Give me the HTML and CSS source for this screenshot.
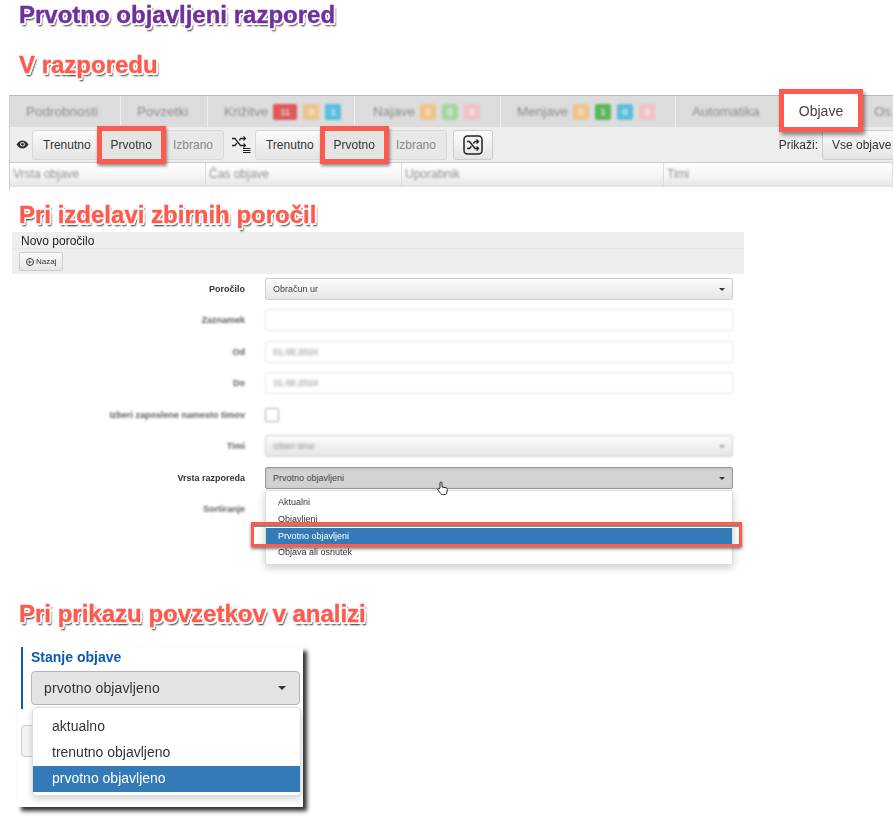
FILE: index.html
```html
<!DOCTYPE html>
<html lang="sl">
<head>
<meta charset="utf-8">
<title>Prvotno objavljeni razpored</title>
<link rel="stylesheet" href="styles.css">
</head>
<body>
<main class="page">
  <h1 class="heading purple">Prvotno objavljeni razpored</h1>
  <h2 class="heading red h-schedule">V razporedu</h2>

  <section class="schedule">
    <nav class="tabs">
      <div class="tab t-pod"><span class="soft">Podrobnosti</span></div>
      <div class="tab t-pov"><span class="soft">Povzetki</span></div>
      <div class="tab t-kri"><span class="soft">Križitve</span><i class="badge wide c-red">11</i><i class="badge c-orange">0</i><i class="badge c-blue">1</i></div>
      <div class="tab t-naj"><span class="soft">Najave</span><i class="badge c-orange">0</i><i class="badge c-green-l">0</i><i class="badge c-pink">0</i></div>
      <div class="tab t-men"><span class="soft">Menjave</span><i class="badge c-orange">0</i><i class="badge c-green">1</i><i class="badge c-blue">0</i><i class="badge c-pink">0</i></div>
      <div class="tab t-aut"><span class="soft">Automatika</span></div>
      <div class="tab-active">Objave</div>
      <div class="tab t-os"><span class="soft">Os</span></div>
    </nav>
    <div class="toolbar">
      <svg class="eye" width="13" height="9" viewBox="0 0 13 9"><path d="M.5 4.500C2.200 1.800 4.200.5 6.500.5s4.300 1.300 6 4c-1.700 2.700-3.700 4-6 4s-4.300-1.300-6-4z" fill="#333"/><circle cx="6.500" cy="4.300" r="2.300" fill="#eee"/><circle cx="6.500" cy="4.300" r="1.400" fill="#333"/></svg>
      <div class="group">
        <span class="btn">Trenutno</span><span class="btn pressed marked">Prvotno</span><span class="btn off">Izbrano</span>
      </div>
      <svg class="shuffle-lines" width="19" height="17" viewBox="0 0 19 17" fill="none" stroke="#222" stroke-width="1.300"><path d="M0 2.500h3l5.500 7H13M0 9.500h3l2-2.500M7.500 4.500l1-2H13"/><path d="M11.500 .5l2 2-2 2M11.500 7.500l2 2-2 2" stroke-width="1.100"/><path d="M11 12.500h7.500M11 14.500h7.500M11 16.500h7.500" stroke-width="1"/></svg>
      <div class="group">
        <span class="btn">Trenutno</span><span class="btn pressed marked">Prvotno</span><span class="btn off">Izbrano</span>
      </div>
      <span class="btn icon-btn">
        <svg width="20" height="20" viewBox="0 0 20 20" fill="none" stroke="#222" stroke-width="1.500"><rect x="1" y="1" width="18" height="18" rx="3.500"/><path d="M4 6.500h2.500l5.500 7h3.500M4 13.500h2.500l1.800-2.300M10.300 8.600l1.700-2.100h3.500"/><path d="M13.500 4.500l2 2-2 2M13.500 11.500l2 2-2 2" stroke-width="1.300"/></svg>
      </span>
      <div class="show">
        <span>Prikaži:</span><span class="btn show-btn">Vse objave</span>
      </div>
    </div>
    <div class="thead">
      <div class="th"><span class="soft">Vrsta objave</span></div>
      <div class="th"><span class="soft">Čas objave</span></div>
      <div class="th"><span class="soft">Uporabnik</span></div>
      <div class="th"><span class="soft">Timi</span></div>
    </div>
  </section>

  <h2 class="heading red h-report">Pri izdelavi zbirnih poročil</h2>

  <section class="report">
    <div class="report-title">Novo poročilo</div>
    <div class="report-bar">
      <span class="back"><svg width="8" height="8" viewBox="0 0 8 8"><circle cx="4" cy="4" r="3.500" fill="none" stroke="#333"/><path d="M5.500 4H3M4 2.700L2.600 4 4 5.300" fill="none" stroke="#333"/></svg>Nazaj</span>
    </div>
    <form class="form">
      <div class="row"><span class="label">Poročilo</span><div class="select"><span>Obračun ur</span><b class="caret"></b></div></div>
      <div class="row gap-10"><span class="label soft">Zaznamek</span><div class="input soft-box"></div></div>
      <div class="row"><span class="label soft">Od</span><div class="input soft-box"><span class="soft muted">01.08.2024</span></div></div>
      <div class="row gap-10"><span class="label soft">Do</span><div class="input soft-box"><span class="soft muted">31.08.2024</span></div></div>
      <div class="row"><span class="label soft">Izberi zaposlene namesto timov</span><div class="check soft-box"></div></div>
      <div class="row gap-10"><span class="label soft">Timi</span><div class="select soft-box"><span class="soft muted">Izberi time</span><b class="caret caret-soft"></b></div></div>
      <div class="row">
        <span class="label">Vrsta razporeda</span>
        <div class="select open"><span>Prvotno objavljeni</span><b class="caret"></b>
          <svg class="hand" width="11" height="14" viewBox="0 0 11 14"><path d="M3 7V2a1 1 0 0 1 2 0v4l4 .8c1 .3 1.500 1 1.300 2L9.700 12c-.2 1-.8 1.500-1.700 1.500H5.500c-.8 0-1.300-.3-1.800-1L1 9c-.7-1 .5-2 1.300-1.200z" fill="#fff" stroke="#222" stroke-width="1"/></svg>
        </div>
        <ul class="menu">
          <li>Aktualni</li>
          <li>Objavljeni</li>
          <li class="current">Prvotno objavljeni</li>
          <li>Objava ali osnutek</li>
          <li class="menu-mark" aria-hidden="true"></li>
        </ul>
      </div>
      <div class="row"><span class="label soft">Sortiranje</span></div>
    </form>
  </section>

  <h2 class="heading red h-analysis">Pri prikazu povzetkov v analizi</h2>

  <section class="card">
    <div class="filter">
      <div class="filter-label">Stanje objave</div>
      <div class="filter-select"><span>prvotno objavljeno</span><b class="caret big"></b></div>
      <ul class="filter-menu">
        <li>aktualno</li>
        <li>trenutno objavljeno</li>
        <li class="current">prvotno objavljeno</li>
      </ul>
    </div>
    <div class="ghost-btn"></div>
  </section>
</main>
</body>
</html>
```
FILE: styles.css
```css
* { box-sizing: border-box; }
html, body { margin: 0; padding: 0; background: #fff; overflow: hidden; }
body { width: 893px; height: 826px; font-family: "Liberation Sans", Arial, sans-serif; color: #333; }
.page { width: 893px; height: 826px; overflow: hidden; padding-top: 1px; filter: blur(.3px); }

.heading {
  margin: 0 0 0 19px;
  font-size: 24px;
  line-height: 28px;
  font-weight: 700;
  -webkit-text-stroke: .4px currentColor;
  text-shadow:
    2px 0 0 #fff, -2px 0 0 #fff, 0 2px 0 #fff, 0 -2px 0 #fff,
    1.500px 1.500px 0 #fff, -1.500px 1.500px 0 #fff, 1.500px -1.500px 0 #fff, -1.500px -1.500px 0 #fff,
    2px 3px 2px rgba(0, 0, 0, .85);
}
.purple { color: #702f9e; }
.red { color: #ff5a4d; }
.h-schedule { margin-top: 22px; }
.h-report { margin-top: 11px; }
.h-analysis { margin-top: 80px; }

.soft { filter: blur(1px); opacity: .8; }
.soft-box { filter: blur(.8px); }

/* schedule */
.schedule { margin: 16px 0 0 9px; width: 884px; height: 95px; border-top: 1px solid #bbb; border-left: 1px solid #ccc; position: relative; }
.tabs { height: 31px; background: #dcdcdc; display: flex; align-items: stretch; font-size: 13.500px; }
.tab { display: flex; align-items: center; gap: 5px; border-right: 1px solid #eee; color: #777; flex: none; padding-left: 16px; }
.t-pod { width: 111px; }
.t-pov { width: 87px; }
.t-kri { width: 147px; }
.t-naj { width: 146px; padding-left: 18px; }
.t-men { width: 175px; }
.t-aut { width: 108px; border-right: 0; }
.t-os { border-right: 0; padding-left: 16px; }
.tab-active { flex: none; width: 74px; margin-top: -2px; background: #fff; display: flex; align-items: center; justify-content: center; font-size: 14px; color: #444; box-shadow: 0 0 0 5px #ff5a4d, 2px 3px 4px 5px rgba(0, 0, 0, .45); position: relative; z-index: 1; }
.badge { width: 16px; height: 16px; margin-right: 1px; border-radius: 2px; font-style: normal; font-size: 9px; color: #fff; display: flex; align-items: center; justify-content: center; filter: blur(1px); }
.badge.wide { width: 24px; }
.c-red { background: #dc5a5a; }
.c-orange { background: #f0c48c; }
.c-blue { background: #5bc0de; }
.c-green-l { background: #a5d6a0; }
.c-green { background: #5cb85c; }
.c-pink { background: #eec4c4; }

.toolbar { height: 36px; background: #eee; border-bottom: 1px solid #ccc; display: flex; align-items: center; font-size: 12px; padding-left: 6px; }
.eye { flex: none; margin-right: 3px; }
.group { display: flex; height: 30px; flex: none; border-radius: 3px; background: #e6e6e6; border: 1px solid #d8d8d8; }
.btn { display: flex; align-items: center; justify-content: center; padding: 0 10px; color: #333; height: 100%; background: linear-gradient(#fbfbfb, #e4e4e4); flex: none; border-radius: 3px 0 0 3px; }
.btn.pressed { background: #e4e4e4; border-radius: 0; padding: 0 9px; margin-left: 1px; }
.btn.off { background: #e8e8e8; color: #888; border-radius: 0 3px 3px 0; padding-left: 12px; }
.marked { box-shadow: 0 0 0 5px #ff5a4d, 1px 2px 3px 5px rgba(0, 0, 0, .45); position: relative; z-index: 1; }
.shuffle-lines { flex: none; margin: 0 4px 0 8px; }
.icon-btn { width: 40px; height: 30px; margin-left: 6px; border: 1px solid #ccc; border-radius: 3px; padding: 0; }
.show { margin-left: auto; margin-right: -24px; display: flex; align-items: center; gap: 4px; height: 30px; flex: none; }
.show-btn { border: 1px solid #ccc; width: 95px; padding: 0 0 0 9px; justify-content: flex-start; font-size: 12px; white-space: nowrap; height: 30px; }

.thead { display: grid; grid-template-columns: 196px 196px 262px 1fr; height: 24px; background: linear-gradient(#fff, #f4f4f4 60%, #e2e2e2); font-size: 12px; color: #777; }
.th { border-right: 1px solid #ddd; padding: 4px 0 0 3px; }

/* report */
.report { margin: 3px 0 0 12px; width: 732px; font-size: 9px; }
.report-title { background: #eee; height: 17px; padding: 2px 0 0 9px; font-size: 12px; line-height: 14px; color: #222; border-bottom: 1px solid #e6e6e6; }
.report-bar { background: #eee; height: 25px; padding: 3px 0 0 7px; }
.back { display: inline-flex; align-items: center; gap: 2px; height: 19px; padding: 0 6px; border: 1px solid #ccc; border-radius: 2px; background: linear-gradient(#fafafa, #e6e6e6); font-size: 8px; color: #333; }
.form { display: block; padding-top: 4px; }
.row { display: grid; grid-template-columns: 233px 468px; column-gap: 20px; align-items: center; height: 22px; margin-bottom: 9px; position: relative; }
.gap-10 { margin-bottom: 10px; }
.label { text-align: right; font-weight: 700; color: #333; font-size: 9px; white-space: nowrap; }
.select { height: 22px; border: 1px solid #ccc; border-radius: 2px; background: linear-gradient(#fcfcfc, #e6e6e6); padding: 0 7px; display: flex; align-items: center; justify-content: space-between; color: #444; position: relative; }
.input { height: 22px; border: 1px solid #e6e6e6; border-radius: 2px; padding: 0 7px; display: flex; align-items: center; }
.muted { color: #666; }
.check { width: 14px; height: 14px; border: 1px solid #aaa; border-radius: 2px; }
.caret { width: 0; height: 0; border: 3px solid transparent; border-top-color: #333; border-bottom: 0; }
.caret-soft { border-top-color: #999; }
.open { background: #d2d2d2; border-color: #999; box-shadow: inset 0 1px 2px rgba(0, 0, 0, .12); }
.hand { position: absolute; left: 171px; top: 13px; z-index: 3; }
.menu { position: absolute; left: 253px; top: 23px; width: 468px; height: 75px; margin: 0; padding: 3px 0; list-style: none; background: #fff; border: 1px solid #ddd; border-radius: 2px; box-shadow: 0 3px 8px rgba(0, 0, 0, .2); z-index: 2; }
.menu li { height: 17px; line-height: 17px; padding-left: 12px; color: #333; }
.menu .current { background: #337ab7; color: #fff; height: 16px; line-height: 16px; }
.menu .menu-mark { position: absolute; left: -15px; top: 31px; width: 491px; height: 25px; padding: 0; background: transparent; border: 3px solid #ff5a4d; box-shadow: 0 2px 3px rgba(0, 0, 0, .5), inset 0 2px 0 #888; }

/* analysis */
.card { margin: 19px 0 0 17px; width: 286px; height: 160px; padding-left: 4px; background: #fff; box-shadow: 4px 4px 4px rgba(0, 0, 0, .8); position: relative; }
.filter { border-left: 2px solid #0a5cb0; height: 62px; padding: 0 3px 0 8px; position: relative; }
.filter-label { font-size: 14px; line-height: 16px; font-weight: 700; color: #0a5cb0; padding-top: 2px; height: 24px; }
.filter-select { height: 34px; border: 1px solid #b5b5b5; border-radius: 4px; background: #e4e4e4; padding: 0 13px 0 12px; font-size: 14px; letter-spacing: .12px; color: #333; display: flex; align-items: center; justify-content: space-between; }
.big { border-width: 4px; border-bottom: 0; }
.filter-menu { position: absolute; left: 9px; top: 60px; width: 269px; height: 89px; margin: 0; padding: 6px 0; list-style: none; background: #fff; border: 1px solid #ddd; border-radius: 4px; box-shadow: 0 3px 6px rgba(0, 0, 0, .18); font-size: 14px; z-index: 2; }
.filter-menu li { height: 26px; line-height: 25px; padding-left: 19px; color: #333; }
.filter-menu .current { background: #337ab7; color: #fff; }
.ghost-btn { margin: 16px 0 0 0; width: 20px; height: 32px; border: 1px solid #ccc; border-radius: 4px; background: #f4f4f4; }
```
